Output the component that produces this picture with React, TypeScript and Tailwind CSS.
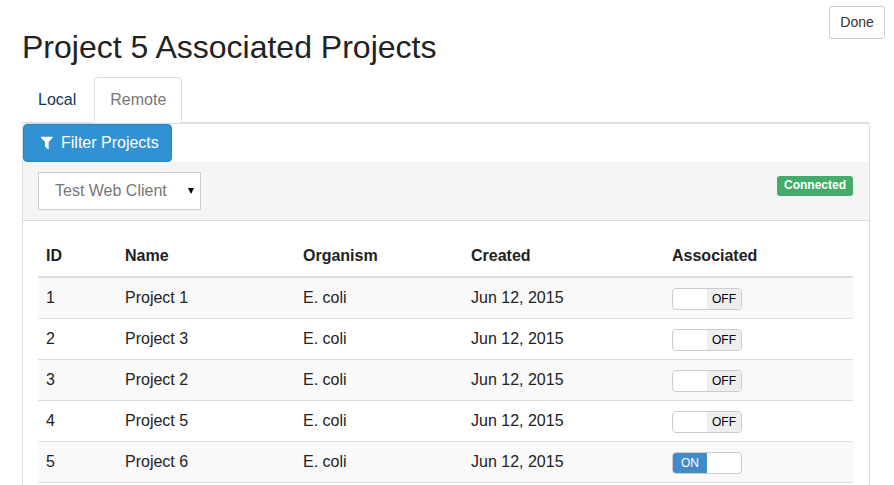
import { useState } from "react";

type Project = { id: number; name: string; organism: string; created: string; associated: boolean };

const PROJECTS: Project[] = [
  { id: 1, name: "Project 1", organism: "E. coli", created: "Jun 12, 2015", associated: false },
  { id: 2, name: "Project 3", organism: "E. coli", created: "Jun 12, 2015", associated: false },
  { id: 3, name: "Project 2", organism: "E. coli", created: "Jun 12, 2015", associated: false },
  { id: 4, name: "Project 5", organism: "E. coli", created: "Jun 12, 2015", associated: false },
  { id: 5, name: "Project 6", organism: "E. coli", created: "Jun 12, 2015", associated: true },
];

function Toggle({ label, initial }: { label: string; initial: boolean }) {
  const [on, setOn] = useState(initial);
  return (
    <label className="relative mt-0.5 flex h-[22px] w-[70px] cursor-pointer overflow-hidden rounded-[4px] border border-[#cccccc] bg-white text-xs leading-5">
      <input
        type="checkbox"
        className="sr-only"
        aria-label={label}
        checked={on}
        onChange={(e) => setOn(e.target.checked)}
      />
      {on ? (
        <span className="w-1/2 bg-[#428bca] text-center text-white">ON</span>
      ) : (
        <span className="ml-auto w-1/2 bg-[#eeeeee] text-center text-black">OFF</span>
      )}
    </label>
  );
}

function FilterIcon() {
  return (
    <svg width="14" height="14" viewBox="0 0 14 14" fill="currentColor" aria-hidden="true">
      <path d="M1.300 0.800h10.900c.5 0 .7.6.4.9L8.700 6v6.800c0 .5-.5.7-.9.4L5.200 11a.6.6 0 0 1-.2-.4V6L.9 1.700C.6 1.400.8.800 1.300.800z" />
    </svg>
  );
}

export default function App() {
  return (
    <div className="bg-white font-['Liberation_Sans',Arial,sans-serif] text-base leading-6 text-[#222222]">
      <header className="flex items-start justify-between pt-1.5 pr-[9px] pb-2 pl-[22px]">
        <h1 className="mt-5 text-[32px] leading-[43px]">Project 5 Associated Projects</h1>
        <button
          type="button"
          className="min-w-14 rounded-[3px] border border-[#cccccc] bg-white px-2.5 py-[5px] text-sm leading-[21px] text-[#333333]"
        >
          Done
        </button>
      </header>

      <main className="mr-6 ml-[22px]">
        <nav className="flex gap-0.5 border-b border-[#dddddd]">
          <a
            href="#local"
            className="-mb-px rounded-t-[4px] border border-transparent px-[15px] py-2.5 text-[#11394f]"
          >
            Local
          </a>
          <a
            href="#remote"
            aria-current="page"
            className="-mb-px rounded-t-[4px] border border-[#dddddd] border-b-white bg-white px-[15px] py-2.5 text-[#777777]"
          >
            Remote
          </a>
        </nav>

        <section className="rounded-[4px] border border-[#dddddd]">
          <button
            type="button"
            className="flex items-center gap-[7px] rounded-[4px] border border-[#2a84be] bg-[#3092d2] py-1.5 pr-3 pl-4 text-white"
          >
            <FilterIcon />
            Filter Projects
          </button>

          <div className="flex items-start justify-between border-b border-[#dddddd] bg-[#f5f5f5] py-2.5 pr-4 pl-[15px]">
            <div className="relative">
              <select
                aria-label="Remote connection"
                className="h-[38px] w-[163px] appearance-none border border-[#cccccc] bg-white pr-6 pl-4 text-[#777777]"
              >
                <option>Test Web Client</option>
              </select>
              <svg
                className="pointer-events-none absolute top-4 right-[7px]"
                width="6"
                height="6"
                viewBox="0 0 6 6"
                aria-hidden="true"
              >
                <path d="M0 0h6L3 6z" fill="#000000" />
              </svg>
            </div>
            <span className="mt-1 h-5 rounded-[3px] bg-[#43ac6a] px-[7px] text-xs leading-[18px] font-bold text-white">
              Connected
            </span>
          </div>

          <div className="py-[15px] pr-4 pl-[15px]">
            <table className="w-full table-fixed border-collapse text-left">
              <thead>
                <tr className="border-b-2 border-[#dddddd]">
                  <th className="w-[79px] p-2">ID</th>
                  <th className="w-[178px] p-2">Name</th>
                  <th className="w-[168px] p-2">Organism</th>
                  <th className="w-[201px] p-2">Created</th>
                  <th className="p-2">Associated</th>
                </tr>
              </thead>
              <tbody>
                {PROJECTS.map((p) => (
                  <tr key={p.id} className="border-b border-[#dddddd] odd:bg-[#f9f9f9]">
                    <td className="p-2">{p.id}</td>
                    <td className="p-2">{p.name}</td>
                    <td className="p-2">{p.organism}</td>
                    <td className="p-2">{p.created}</td>
                    <td className="px-2">
                      <Toggle label={`Associate ${p.name}`} initial={p.associated} />
                    </td>
                  </tr>
                ))}
              </tbody>
            </table>
          </div>
        </section>
      </main>
    </div>
  );
}
